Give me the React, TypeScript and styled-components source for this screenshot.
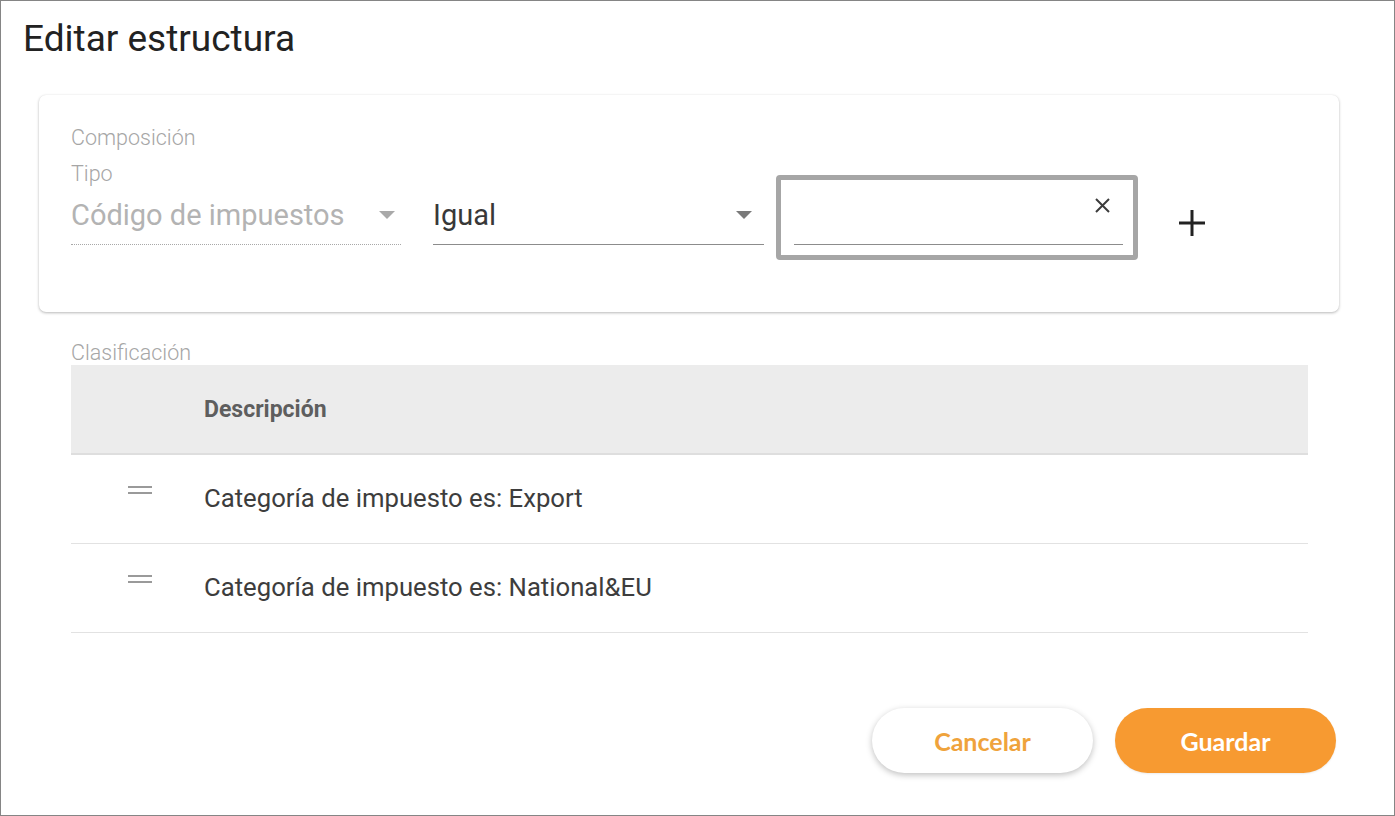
import styled, { createGlobalStyle } from "styled-components"

const GlobalStyle = createGlobalStyle`
  html, body {
    margin: 0;
    padding: 0;
    background: #ffffff;
  }
  body {
    font-family: Roboto, "Liberation Sans", Arial, sans-serif;
    color: #333;
  }
  * {
    box-sizing: border-box;
  }
`

const Frame = styled.div`
  width: 1395px;
  height: 816px;
  border: 1px solid #858585;
  padding: 16px 58px 0 22px;
  display: flex;
  flex-direction: column;
  background: #fff;
`

const Title = styled.h1`
  margin: 0;
  font-size: 37px;
  line-height: 43px;
  font-weight: 400;
  color: #222;
`

const Card = styled.section`
  margin: 35px 0 0 16px;
  width: 1300px;
  border-radius: 7px;
  background: #fff;
  box-shadow: 0 1px 3px rgba(0, 0, 0, 0.28), 0 0 1px rgba(0, 0, 0, 0.06);
  padding: 29px 32px 52px;
`

const SmallLabel = styled.div<{ $gap?: number }>`
  font-size: 21.5px;
  line-height: 28px;
  font-weight: 300;
  color: #a6a6a6;
  margin-top: ${({ $gap }) => $gap ?? 0}px;
`

const FieldsRow = styled.div`
  display: flex;
  align-items: flex-start;
  margin-top: 8px;
`

const SelectField = styled.div<{ $width: number; $offset: number; $space: number }>`
  width: ${({ $width }) => $width}px;
  margin-top: ${({ $offset }) => $offset}px;
  margin-right: ${({ $space }) => $space}px;
  display: flex;
  flex-direction: column;
`

const SelectValue = styled.div<{ $disabled?: boolean }>`
  height: 57px;
  display: flex;
  align-items: center;
  justify-content: space-between;
  padding-right: ${({ $disabled }) => ($disabled ? 6 : 12)}px;
  font-size: 29px;
  color: ${({ $disabled }) => ($disabled ? "#b3b3b3" : "#383838")};
  border-bottom: 1px ${({ $disabled }) => ($disabled ? "dotted #a8a8a8" : "solid #8c8c8c")};
  padding-bottom: 2px;
`

const Caret = styled.span<{ $disabled?: boolean }>`
  width: 0;
  height: 0;
  border-left: 8px solid transparent;
  border-right: 8px solid transparent;
  border-top: 8px solid ${({ $disabled }) => ($disabled ? "#a9a9a9" : "#7a7a7a")};
`

const FocusBox = styled.div`
  margin-top: 15px;
  width: 362px;
  height: 85px;
  border: 5px solid #a6a6a6;
  border-radius: 4px;
  padding: 0 10px 10px 13px;
  display: flex;
  flex-direction: column;
  justify-content: flex-end;
`

const InputLine = styled.div`
  height: 60px;
  border-bottom: 1px solid #8c8c8c;
  display: flex;
  justify-content: flex-end;
  padding: 12px 12px 0 0;
`

const IconButton = styled.button<{ $top: number; $left: number }>`
  border: none;
  background: transparent;
  padding: 0;
  margin-top: ${({ $top }) => $top}px;
  margin-left: ${({ $left }) => $left}px;
  display: flex;
  align-self: flex-start;
  cursor: pointer;
`

const SectionLabel = styled.div`
  margin: 29px 0 0 48px;
  font-size: 21.5px;
  line-height: 24px;
  font-weight: 300;
  color: #a6a6a6;
`

const Table = styled.div`
  margin-left: 48px;
  width: 1237px;
  display: flex;
  flex-direction: column;
`

const HeaderRow = styled.div`
  height: 90px;
  background: #ececec;
  border-bottom: 2px solid #dedede;
  display: grid;
  grid-template-columns: 133px 1fr;
  align-items: center;
`

const HeaderCell = styled.div`
  grid-column: 2;
  font-size: 23px;
  font-weight: 700;
  color: #5e5e5e;
`

const BodyRow = styled.div`
  height: 89px;
  border-bottom: 1px solid #e2e2e2;
  display: grid;
  grid-template-columns: 133px 1fr;
  align-items: center;
`

const DragHandle = styled.span`
  justify-self: start;
  margin: 0 0 18px 57px;
  width: 24px;
  height: 8px;
  border-top: 2px solid #9a9a9a;
  border-bottom: 2px solid #9a9a9a;
`

const CellText = styled.div`
  font-size: 25.7px;
  color: #3d3d3d;
  padding-bottom: 2px;
`

const Actions = styled.div`
  margin-top: 75px;
  display: flex;
  justify-content: flex-end;
  gap: 22px;
`

const ActionButton = styled.button<{ $primary?: boolean }>`
  width: 221px;
  height: 65px;
  border-radius: 33px;
  border: none;
  font-family: Lato, "Liberation Sans", Arial, sans-serif;
  font-weight: 700;
  font-size: 25px;
  cursor: pointer;
  background: ${({ $primary }) => ($primary ? "#f79a31" : "#fff")};
  color: ${({ $primary }) => ($primary ? "#fff" : "#efa33c")};
  box-shadow: ${({ $primary }) =>
    $primary ? "0 1px 2px rgba(0,0,0,0.08)" : "0 2px 6px rgba(0,0,0,0.25)"};
`

const rows = ["Categoría de impuesto es: Export", "Categoría de impuesto es: National&EU"]

const CloseIcon = () => (
  <svg width="17" height="17" viewBox="0 0 17 17">
    <path d="M2 2 L15 15 M15 2 L2 15" stroke="#3c3c3c" strokeWidth="2" />
  </svg>
)

const PlusIcon = () => (
  <svg width="28" height="28" viewBox="0 0 28 28">
    <path d="M14 1 V27 M1 14 H27" stroke="#222" strokeWidth="3" />
  </svg>
)

export default function App() {
  return (
    <>
      <GlobalStyle />
      <Frame>
        <Title>Editar estructura</Title>

        <Card>
          <SmallLabel>Composición</SmallLabel>
          <FieldsRow>
            <SelectField $width={330} $offset={0} $space={32}>
              <SmallLabel $gap={0}>Tipo</SmallLabel>
              <SelectValue $disabled>
                <span>Código de impuestos</span>
                <Caret $disabled />
              </SelectValue>
            </SelectField>

            <SelectField $width={331} $offset={28} $space={12}>
              <SelectValue>
                <span>Igual</span>
                <Caret />
              </SelectValue>
            </SelectField>

            <FocusBox>
              <InputLine>
                <CloseIcon />
              </InputLine>
            </FocusBox>

            <IconButton $top={49} $left={40} aria-label="Añadir">
              <PlusIcon />
            </IconButton>
          </FieldsRow>
        </Card>

        <SectionLabel>Clasificación</SectionLabel>
        <Table>
          <HeaderRow>
            <HeaderCell>Descripción</HeaderCell>
          </HeaderRow>
          {rows.map((text) => (
            <BodyRow key={text}>
              <DragHandle />
              <CellText>{text}</CellText>
            </BodyRow>
          ))}
        </Table>

        <Actions>
          <ActionButton>Cancelar</ActionButton>
          <ActionButton $primary>Guardar</ActionButton>
        </Actions>
      </Frame>
    </>
  )
}
